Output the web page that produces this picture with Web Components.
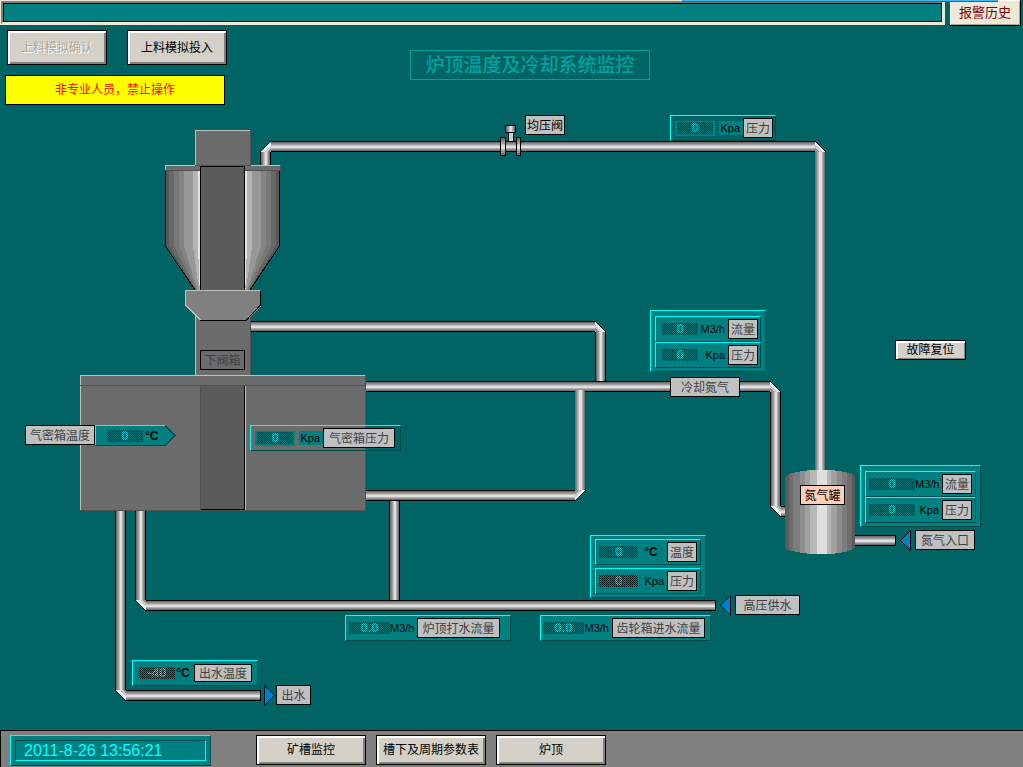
<!DOCTYPE html>
<html lang="zh-CN">
<head>
<meta charset="utf-8">
<title>炉顶温度及冷却系统监控</title>
<style>
  html, body { margin: 0; background: #006464; }
  body { font: 12px/16px "Liberation Sans", "Noto Sans CJK SC", sans-serif; color: #000; }
</style>
</head>
<body>
<monitor-page></monitor-page>
<script>
const define = (name, html, setup) => {
  const tpl = document.createElement('template');
  tpl.innerHTML = html;
  customElements.define(name, class extends HTMLElement {
    constructor() {
      super();
      this.attachShadow({ mode: 'open' }).append(tpl.content.cloneNode(true));
    }
    connectedCallback() { if (setup) setup(this, this.shadowRoot); }
  });
};

/* Raised push button */
define('push-button', `
<style>
  :host { display: inline-flex; width: var(--w, 100px); height: var(--h, 35px); }
  button { flex: 1; min-width: 0; margin: 0; padding: 0; font: inherit; color: #000; background: #d4d0c8;
    border: 1px solid #000; border-radius: 0; white-space: nowrap;
    box-shadow: inset 2px 2px #fff, inset -2px -2px #808080; }
  button:disabled { color: #aca899; text-shadow: 1px 1px #fff; }
  :host([small]) button { box-shadow: inset 2px 2px #fff, inset -1px -1px #808080; }
  :host([alarm]) button { color: #800000; background: #ece9d8; font-size: 13px; border-width: 0 1px 1px 0;
    box-shadow: inset 1px 1px #fff, inset -1px -1px #aca899; }
</style>
<button type="button"><slot></slot></button>`,
(host, root) => { root.querySelector('button').disabled = host.hasAttribute('disabled'); });

/* Name plate */
define('name-tag', `
<style>
  :host { display: flex; align-items: center; justify-content: center; box-sizing: border-box; padding-top: 2px;
    width: var(--w, 30px); height: var(--h, 20px); border: 1px solid #000;
    background: var(--bg, #c0c0c0); color: var(--fg, #404040); white-space: nowrap; flex: none; }
</style>
<slot></slot>`);

/* Digital value behind a dotted mask */
define('dot-value', `
<style>
  :host { display: flex; position: relative; flex: none; box-sizing: border-box; height: 12px; width: var(--vw, 36px);
    justify-content: center; align-items: center; color: #00ffff; font-size: 13px; font-weight: bold; line-height: 12px; }
  svg { position: absolute; inset: 0; }
</style>
<output><slot></slot></output>
<svg width="100%" height="12" shape-rendering="crispEdges" aria-hidden="true"><defs><pattern id="dots" width="2" height="2" patternUnits="userSpaceOnUse"><path d="M0 0H1V1H0ZM1 1H2V2H1Z" fill="#001414"/></pattern></defs><rect width="100%" height="12" fill="url(#dots)"/></svg>`);

/* One measured quantity: value, unit, name */
define('value-row', `
<style>
  :host { display: flex; align-items: center; box-sizing: border-box; height: 26px; padding-left: var(--pad, 6px);
    background: #008080; border: 1px solid; border-color: #00ffff #004848 #004848 #00ffff; width: var(--rw, auto); }
  .unit { width: var(--uw, 30px); flex: none; box-sizing: border-box; padding-right: 3px; text-align: right; font-size: 11px; white-space: nowrap; }
  .unit.deg { font-weight: bold; font-size: 12px; text-align: center; }
  name-tag { --w: var(--lw, 30px); --h: var(--lh, 20px); }
  :host([clear]) { background: none; }
  :host([clear]) .box, :host([clear]) .unit { background: #008080; }
  :host([clear]) .box { padding: 1px 2px 2px; margin-right: 4px; --vw: 36px; }
  :host([clear]) .unit { line-height: 14px; }
</style>
<span class="box"><dot-value></dot-value></span><span class="unit"></span><name-tag><slot></slot></name-tag>`,
(host, root) => {
  const unit = root.querySelector('.unit');
  root.querySelector('dot-value').textContent = host.getAttribute('value');
  unit.textContent = host.getAttribute('unit');
  unit.classList.toggle('deg', host.getAttribute('unit') === '°C');
});

define('value-group', `
<style>
  :host { display: flex; flex-direction: column; box-sizing: border-box; gap: var(--gap, 0px); padding: var(--gp, 5px 4px 3px);
    background: #008080; border: 1px solid; border-color: #00ffff #004848 #004848 #00ffff; width: var(--gw, 116px); }
</style>
<slot></slot>`);

/* Arrow-shaped value */
define('arrow-value', `
<style>
  :host { display: flex; align-items: center; position: relative; width: 81px; height: 21px; }
  svg { position: absolute; inset: 0; }
  dot-value { margin-left: 12px; }
  b { position: relative; margin-left: 2px; }
</style>
<svg width="81" height="21" shape-rendering="crispEdges"><path d="M0 0H70L80 10L70 20H0Z" fill="#008080"/>
<path d="M.5 20V.5H70" fill="none" stroke="#00ffff"/><path d="M70 .5L80 10.5L70 20.5H0" fill="none" stroke="#004848"/></svg>
<dot-value><slot></slot></dot-value><b>°C</b>`);

/* Pipes, furnace top and nitrogen tank */
const pipeH = (x, y, w, cap) =>
  `<rect x="${x}" y="${y}" width="${w}" height="11"/><rect x="${x}" y="${y + 1}" width="${w - (cap ? 1 : 0)}" height="9" fill="url(#gh)"/>`;
const pipeV = (x, y, h, bare) => bare
  ? `<rect x="${x}" y="${y}" width="10" height="${h}" fill="url(#gv)"/>`
  : `<rect x="${x}" y="${y}" width="11" height="${h}"/><rect x="${x + 1}" y="${y}" width="9" height="${h}" fill="url(#gv)"/>`;
/* sx, sy: direction in which the elbow's cut corner points */
const elbow = (cx, cy, sx, sy) =>
  `<g transform="translate(${cx + .5} ${cy + .5}) scale(${sx} ${sy})"><path d="M-5.5 5.5L5.5 -5.5H-5.5Z" fill="#c8c8c8"/><path d="M-5.5 5.5L5.5 -5.5H1.5L-5.5 1.5Z" fill="#f0f0f0"/><path d="M-5.5 -5.5H-1.5L-5.5 -1.5Z" fill="#909090"/><path d="M-5.5 5.5L5.5 -5.5" stroke="#000"/></g>`;
const vessel = (() => {
  const xs = [165, 169, 174, 179, 184, 193, 198, 200];
  const fill = ['#565656', '#686868', '#787878', '#848484', '#989898', '#b4b4b4', '#e4e4e4'];
  const low = x => 195 + (x - 165) / 7;
  return fill.map((f, i) => {
    const a = xs[i], b = xs[i + 1];
    return `<path fill="${f}" d="M${a} 171H${b}V246L${low(b)} 290H${low(a)}L${a} 246Z"/>`;
  }).join('') + '<path d="M165.5 171V246L195 290" fill="none" stroke="#000"/>';
})();
const stops = (offs, cols) => cols.map((c, i) =>
  `<stop offset="${offs[i]}" stop-color="${c}"/><stop offset="${offs[i + 1]}" stop-color="${c}"/>`).join('');
const pipeStops = stops([0, .11, .22, .33, .44, .67, .78, .89, 1],
  ['#707070', '#888888', '#a0a0a0', '#c0c0c0', '#e0e0e0', '#b0b0b0', '#909090', '#707070']);
const tankStops = stops([0, .06, .12, .21, .29, .36, .46, .6, .66, .74, .81, .88, .95, 1],
  ['#5c5c5c', '#6c6c6c', '#7c7c7c', '#8e8e8e', '#a0a0a0', '#b8b8b8', '#e0e0e0', '#b8b8b8', '#a0a0a0', '#8c8c8c', '#7c7c7c', '#6c6c6c', '#585858']);

define('plant-drawing', `
<style>:host { display: block; } svg { display: block; }</style>
<svg width="1023" height="620" viewBox="0 110 1023 620" shape-rendering="crispEdges" aria-hidden="true">
<defs>
  <linearGradient id="gh" x1="0" y1="0" x2="0" y2="1">${pipeStops}</linearGradient>
  <linearGradient id="gv" x1="0" y1="0" x2="1" y2="0">${pipeStops}</linearGradient>
  <linearGradient id="gt" x1="0" y1="0" x2="1" y2="0">${tankStops}</linearGradient>
</defs>
${pipeH(271, 141, 544)}${pipeV(260, 151, 15)}${elbow(265, 146, -1, -1)}
${pipeV(815, 151, 320, true)}${elbow(820, 146, 1, -1)}
${pipeH(250, 321, 345)}${pipeV(595, 331, 50)}${elbow(600, 326, 1, -1)}
${pipeH(365, 381, 405)}${pipeV(770, 391, 115)}${elbow(775, 386, 1, -1)}
${pipeH(780, 506, 8)}${elbow(775, 511, -1, 1)}
${pipeV(575, 390, 101, true)}${pipeH(365, 490, 210)}${elbow(580, 495, 1, 1)}
${pipeV(389, 501, 99)}
${pipeV(135, 510, 91)}${pipeH(145, 600, 571, true)}${elbow(140, 605, -1, 1)}
${pipeV(115, 510, 181)}${pipeH(125, 690, 136, true)}${elbow(120, 695, -1, 1)}
${pipeH(854, 535, 42, true)}

<path d="M785 477L788 474L797 472L810 470H832L845 472L852 474L855 477V548L852 550L845 552L832 554H810L797 552L788 550L785 548Z" fill="url(#gt)"/>

<rect x="508" y="132" width="6" height="9"/><rect x="509" y="132" width="4" height="9" fill="#d0d0d0"/>
<rect x="505" y="125" width="11" height="8"/><rect x="506" y="126" width="9" height="6" fill="url(#gv)"/>
<rect x="500" y="137" width="6" height="19"/><rect x="501" y="138" width="4" height="17" fill="url(#gh)"/>
<rect x="516" y="137" width="5" height="19"/><rect x="517" y="138" width="3" height="17" fill="url(#gh)"/>

<rect x="195" y="130" width="56" height="246" fill="#6c6c6c"/>
<path d="M195.5 376V130.5H250" fill="none" stroke="#c0c0c0"/><path d="M250.5 130V376" stroke="#505050"/>
${vessel}<g transform="translate(445 0) scale(-1 1)">${vessel}</g>
<rect x="165" y="165" width="116" height="6" fill="#6c6c6c"/>
<path d="M165.5 170V165.5H195M251 165.5H280" fill="none" stroke="#c0c0c0"/><path d="M165 170.5H280.5V166M195 165.5H251" fill="none" stroke="#505050"/>
<rect x="200.5" y="166.5" width="44" height="125" fill="#5b5b5b" stroke="#000"/>
<path d="M185 290H261V306L246 321H201L185 305Z" fill="#808080"/>
<path d="M201 320.5L185.5 305V290.5H260" fill="none" stroke="#c0c0c0"/><path d="M260.5 291V305L246 320.5H200" fill="none" stroke="#000"/>

<rect x="80" y="375" width="286" height="136" fill="#6c6c6c"/>
<path d="M80.5 510V375.5H365" fill="none" stroke="#c0c0c0"/><path d="M80 510.5H365.5V376M80 385.5H365" fill="none" stroke="#505050"/>
<rect x="200" y="386" width="45" height="124" fill="#5b5b5b"/>
<path d="M200.5 386V510" stroke="#505050"/><path d="M201 509.5H244.5V386" fill="none" stroke="#000"/><path d="M245.5 386V510" stroke="#c0c0c0"/>

<g fill="#0080c8" stroke="#000"><path d="M910.5 530.5V550.5L900.5 540.5Z"/><path d="M730.5 595.5V615.5L720.5 605.5Z"/><path d="M264.5 685.5V705.5L274.5 695.5Z"/></g>
</svg>`);

/* Free canvas of the process picture; --x and --y are scene coordinates */
define('plant-canvas', `
<style>
  :host { display: block; position: relative; overflow: hidden; }
  .node { position: absolute; left: calc(var(--x) * 1px); top: calc(var(--y) * 1px - 110px); }
</style>
<plant-drawing></plant-drawing>
<name-tag class="node" style="--x:525;--y:115;--w:40px;--fg:#000">均压阀</name-tag>
<value-row class="node" clear value="0" unit="Kpa" style="--x:670;--y:115;--rw:106px;--pad:4px;--uw:24px">压力</value-row>
<name-tag class="node" style="--x:200;--y:350;--w:45px;--bg:transparent">下阀箱</name-tag>
<value-group class="node" style="--x:650;--y:310">
  <value-row value="0" unit="M3/h">流量</value-row>
  <value-row value="0" unit="Kpa">压力</value-row>
</value-group>
<name-tag class="node" style="--x:670;--y:377;--w:70px">冷却氮气</name-tag>
<push-button class="node" small style="--x:895;--y:340;--w:71px;--h:20px">故障复位</push-button>
<name-tag class="node" style="--x:25;--y:425;--w:70px">气密箱温度</name-tag>
<arrow-value class="node" style="--x:95;--y:425">0</arrow-value>
<value-row class="node" clear value="0" unit="Kpa" style="--x:250;--y:425;--rw:151px;--pad:4px;--uw:24px;--lw:72px">气密箱压力</value-row>
<name-tag class="node" style="--x:800;--y:485;--w:45px;--bg:#ffcdb9;--fg:#000">氮气罐</name-tag>
<value-group class="node" style="--x:860;--y:465;--gw:121px;--pad:3px;--vw:46px;--uw:27px">
  <value-row value="0" unit="M3/h">流量</value-row>
  <value-row value="0" unit="Kpa">压力</value-row>
</value-group>
<name-tag class="node" style="--x:915;--y:530;--w:60px">氮气入口</name-tag>
<value-group class="node" style="--x:590;--y:535;--gp:3px 4px;--gap:3px;--pad:3px;--vw:39px;--uw:29px">
  <value-row value="0" unit="°C">温度</value-row>
  <value-row value="0" unit="Kpa">压力</value-row>
</value-group>
<name-tag class="node" style="--x:735;--y:595;--w:65px">高压供水</name-tag>
<value-row class="node" value="0.0" unit="M3/h" style="--x:345;--y:615;--rw:166px;--pad:3px;--vw:41px;--uw:27px;--lw:83px">炉顶打水流量</value-row>
<value-row class="node" value="0.0" unit="M3/h" style="--x:540;--y:615;--rw:171px;--pad:2px;--vw:41px;--uw:28px;--lw:93px">齿轮箱进水流量</value-row>
<value-row class="node" value="-40" unit="°C" style="--x:132;--y:660;--rw:126px;--uw:19px;--lw:58px;--lh:18px">出水温度</value-row>
<name-tag class="node" style="--x:276;--y:685;--w:35px">出水</name-tag>`);

define('alarm-bar', `
<style>
  :host { display: flex; position: relative; height: 26px; gap: 5px; padding-right: 2px; box-sizing: border-box; }
  input { flex: 1; min-width: 0; height: 25px; box-sizing: border-box; margin: 0; padding: 0 4px; font: inherit; border-radius: 0;
    background: #008080; border: 3px solid; border-color: #808080 #ece9d8 #ece9d8 #808080;
    box-shadow: inset 0 0 0 1px #000; outline: 1px solid #ece9d8; outline-offset: -1px; }
  i { position: absolute; top: 0; right: 25px; width: 316px; height: 2px; box-sizing: border-box; background: #40b8f0; border-bottom: 1px solid #206890; }
</style>
<input type="text" readonly aria-label="报警"><push-button alarm style="--w:71px;--h:26px">报警历史</push-button><i></i>`);

define('page-head', `
<style>
  :host { display: flex; align-items: flex-start; gap: 183px; height: 84px; box-sizing: border-box; padding: 4px 0 0 5px; }
  .tools { display: flex; flex-direction: column; gap: 10px; flex: none; }
  .row { display: flex; gap: 20px; padding-left: 2px; }
  .notice { margin: 0; width: 220px; height: 30px; box-sizing: border-box; border: 1px solid #000; background: #ffff00; color: #ff0000;
    display: flex; align-items: center; justify-content: center; }
  h1 { margin: 20px 0 0; width: 240px; height: 30px; box-sizing: border-box; border: 1px solid #00a0a0; color: #00a0a0;
    font-size: 19px; font-weight: 500; line-height: 30px; text-align: center; white-space: nowrap; flex: none; }
</style>
<div class="tools">
  <div class="row"><push-button disabled>上料模拟确认</push-button><push-button>上料模拟投入</push-button></div>
  <p class="notice">非专业人员，禁止操作</p>
</div>
<h1>炉顶温度及冷却系统监控</h1>`);

define('nav-bar', `
<style>
  :host { display: flex; align-items: flex-start; height: 37px; box-sizing: border-box; padding: 4px 0 0 9px;
    background: #808080; border: solid #000; border-width: 1px 0 0 1px; }
  .clock { flex: none; box-sizing: border-box; width: 201px; height: 31px; padding: 4px; background: #008080;
    border: 1px solid; border-color: #00ffff #004848 #004848 #00ffff; margin-right: 45px; }
  time { display: block; box-sizing: border-box; height: 21px; padding-left: 8px; border: 1px solid;
    border-color: #004848 #00ffff #00ffff #004848; color: #00ffff; font-size: 16px; line-height: 19px; white-space: nowrap; }
  nav { display: flex; gap: 10px; --w: 110px; --h: 30px; }
</style>
<div class="clock"><time datetime="2011-08-26T13:56:21">2011-8-26 13:56:21</time></div>
<nav><push-button>矿槽监控</push-button><push-button>槽下及周期参数表</push-button><push-button>炉顶</push-button></nav>`);

define('monitor-page', `
<style>
  :host { display: flex; flex-direction: column; min-height: 100vh; }
  plant-canvas { flex: 1 0 auto; }
</style>
<alarm-bar></alarm-bar><page-head></page-head><plant-canvas></plant-canvas><nav-bar></nav-bar>`);
</script>
</body>
</html>
